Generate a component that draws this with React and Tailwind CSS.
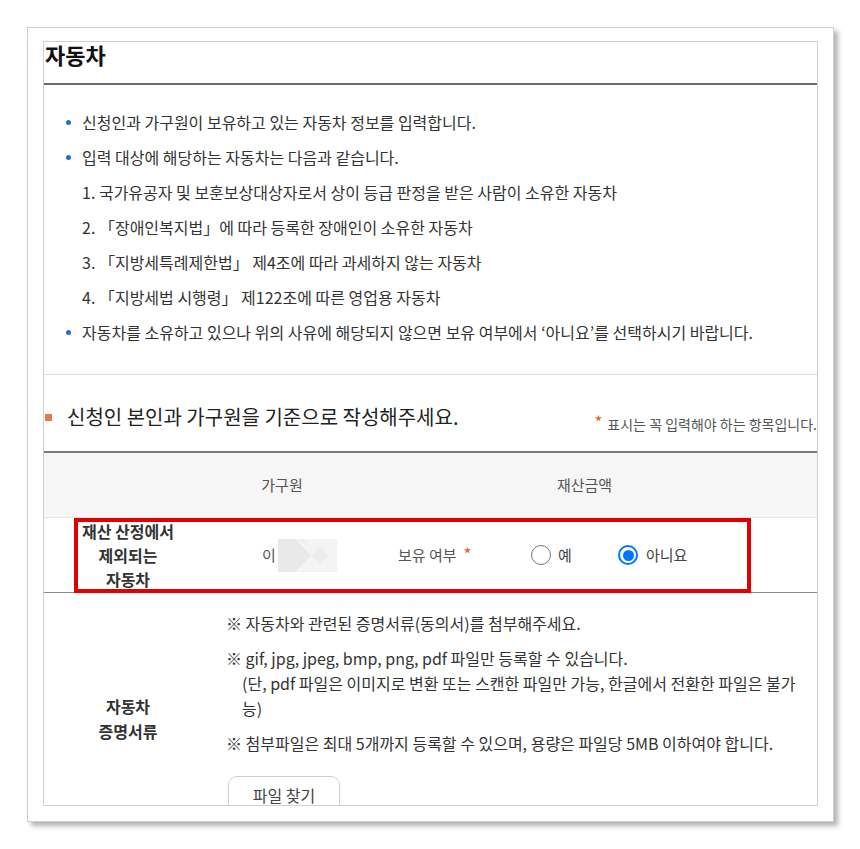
import React from "react";

const bullets = [
  { type: "dot", text: "신청인과 가구원이 보유하고 있는 자동차 정보를 입력합니다." },
  { type: "dot", text: "입력 대상에 해당하는 자동차는 다음과 같습니다." },
  { type: "num", text: "1. 국가유공자 및 보훈보상대상자로서 상이 등급 판정을 받은 사람이 소유한 자동차" },
  { type: "num", text: "2. 「장애인복지법」에 따라 등록한 장애인이 소유한 자동차" },
  { type: "num", text: "3. 「지방세특례제한법」 제4조에 따라 과세하지 않는 자동차" },
  { type: "num", text: "4. 「지방세법 시행령」 제122조에 따른 영업용 자동차" },
  { type: "dot", text: "자동차를 소유하고 있으나 위의 사유에 해당되지 않으면 보유 여부에서 ‘아니요’를 선택하시기 바랍니다." },
];

const Radio = ({ checked }) =>
  checked ? (
    <span className="flex h-[20px] w-[20px] items-center justify-center rounded-full border-2 border-[#0075ff] bg-white">
      <span className="h-[11px] w-[11px] rounded-full bg-[#0075ff]" />
    </span>
  ) : (
    <span className="h-[20px] w-[20px] rounded-full border-[1.5px] border-[#767676] bg-white" />
  );

// blurred (masked) name
const Masked = () => (
  <svg width="59" height="33" viewBox="0 0 59 33" className="block">
    <rect width="59" height="33" fill="#f4f4f4" />
    <polygon points="0,0 17,0 33,16.5 17,33 0,33" fill="#e9e9e9" />
    <polygon points="33,16.5 42,8 51,16.5 42,25" fill="#ececec" />
    <polygon points="17,0 26,0 33,8 " fill="#f0f0f0" />
  </svg>
);

export default function App() {
  return (
    <div className="min-h-screen bg-white pl-[27px] pt-[27px] font-['Noto_Sans_CJK_KR','Noto_Sans',sans-serif] text-[#333]">
      <div className="h-[795px] w-[807px] border border-[#cfcfcf] bg-white px-[15px] pb-[15px] pt-[13px] shadow-[4px_4px_5px_rgba(0,0,0,0.3)]">
        <div className="h-[765px] w-[775px] overflow-hidden border border-[#d0d0d0]">
          {/* title */}
          <div className="h-[41px] pl-[1px]">
            <h2 className="text-[22px] font-bold leading-[24px] text-[#111]">자동차</h2>
          </div>
          <div className="h-[2px] bg-[#6b6b6b]" />

          {/* guide list */}
          <ul className="border-b border-[#dcdcdc] pb-[24px] pt-[20px] text-[16px] leading-[35px]">
            {bullets.map((b, i) => (
              <li key={i} className="flex items-center">
                {b.type === "dot" ? (
                  <>
                    <span className="ml-[22px] mr-[11px] h-[5px] w-[5px] rounded-full bg-[#1b6fd8]" />
                    <span>{b.text}</span>
                  </>
                ) : (
                  <span className="pl-[38px]">{b.text}</span>
                )}
              </li>
            ))}
          </ul>

          {/* section heading */}
          <div className="flex items-start justify-between pb-[17px] pt-[28px]">
            <div className="flex items-center">
              <span className="ml-[1px] mr-[15px] h-[7px] w-[7px] bg-[#e8784c]" />
              <span className="text-[20px] leading-[28px] text-[#222]">
                신청인 본인과 가구원을 기준으로 작성해주세요.
              </span>
            </div>
            <div className="mt-[11px] flex items-start whitespace-nowrap text-[14px] leading-[20px] text-[#555]">
              <span className="mr-[5px] mt-[-2px] text-[17px] text-[#d9652e]">*</span>
              표시는 꼭 입력해야 하는 항목입니다.
            </div>
          </div>

          {/* table */}
          <div className="border-t-2 border-[#7a7a7a]">
            <div className="flex h-[65px] items-center border-b border-[#e3e3e3] bg-[#f6f6f6] text-[15px] text-[#555]">
              <div className="w-[168px]" />
              <div className="w-[140px] text-center">가구원</div>
              <div className="flex-1 text-center">재산금액</div>
            </div>

            <div className="relative flex h-[75px] items-center border-b border-[#8a8a8a] text-[15px]">
              <div className="w-[168px] text-center text-[16px] font-bold leading-[24px] text-[#333]">
                재산 산정에서
                <br />
                제외되는
                <br />
                자동차
              </div>
              <div className="flex w-[186px] items-center pl-[50px] text-[#555]">
                <span className="mr-[2px]">이</span>
                <Masked />
              </div>
              <div className="flex w-[133px] items-start text-[#555]">
                보유 여부
                <span className="ml-[7px] mt-[-3px] text-[17px] text-[#d9652e]">*</span>
              </div>
              <div className="flex w-[87px] items-center gap-[7px] text-[#444]">
                <Radio checked={false} />
                <span>예</span>
              </div>
              <div className="flex items-center gap-[8px] text-[#444]">
                <Radio checked />
                <span>아니요</span>
              </div>
              {/* highlight overlay */}
              <div className="pointer-events-none absolute left-[30px] top-0 h-[75px] w-[677px] border-4 border-[#e00000]" />
            </div>

            <div className="flex items-center text-[16px]">
              <div className="w-[168px] text-center font-bold leading-[25px] text-[#333]">
                자동차
                <br />
                증명서류
              </div>
              <div className="pb-[30px] pl-[14px] pt-[18px] leading-[25px] text-[#333]">
                <p className="mb-[10px] whitespace-nowrap">※ 자동차와 관련된 증명서류(동의서)를 첨부해주세요.</p>
                <p className="whitespace-nowrap">※ gif, jpg, jpeg, bmp, png, pdf 파일만 등록할 수 있습니다.</p>
                <p className="mb-[10px] whitespace-nowrap pl-[16px]">
                  (단, pdf 파일은 이미지로 변환 또는 스캔한 파일만 가능, 한글에서 전환한 파일은 불가
                  <br />
                  능)
                </p>
                <p className="whitespace-nowrap">
                  ※ 첨부파일은 최대 5개까지 등록할 수 있으며, 용량은 파일당 5MB 이하여야 합니다.
                </p>
                <button className="ml-[2px] mt-[20px] h-[38px] w-[112px] rounded-[9px] border border-[#cfcfcf] bg-white text-[16px] text-[#444]">
                  파일 찾기
                </button>
              </div>
            </div>
          </div>
        </div>
      </div>
    </div>
  );
}
